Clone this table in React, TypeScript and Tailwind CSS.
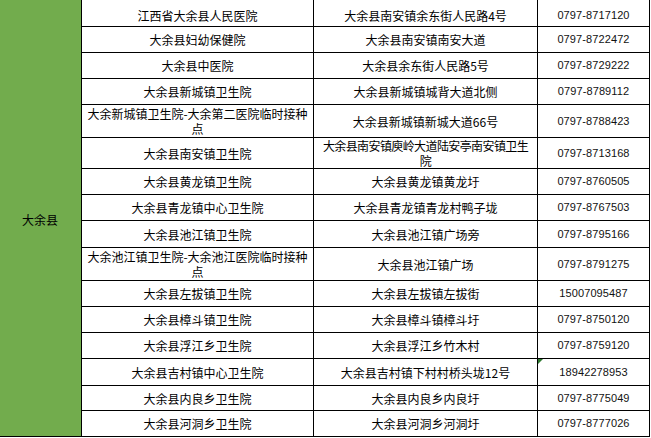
import React from "react";

type Row = {
  name: React.ReactNode;
  address: React.ReactNode;
  phone: string;
  flag?: boolean;
};

const rows: Row[] = [
  { name: "江西省大余县人民医院", address: "大余县南安镇余东街人民路4号", phone: "0797-8717120" },
  { name: "大余县妇幼保健院", address: "大余县南安镇南安大道", phone: "0797-8722472" },
  { name: "大余县中医院", address: "大余县余东街人民路5号", phone: "0797-8729222" },
  { name: "大余县新城镇卫生院", address: "大余县新城镇城背大道北侧", phone: "0797-8789112" },
  {
    name: (
      <>
        大余新城镇卫生院-大余第二医院临时接种
        <br />点
      </>
    ),
    address: "大余县新城镇新城大道66号",
    phone: "0797-8788423",
  },
  {
    name: "大余县南安镇卫生院",
    address: (
      <span className="tracking-[-0.6px]">
        大余县南安镇庾岭大道陆安亭南安镇卫生
        <br />院
      </span>
    ),
    phone: "0797-8713168",
  },
  { name: "大余县黄龙镇卫生院", address: "大余县黄龙镇黄龙圩", phone: "0797-8760505" },
  { name: "大余县青龙镇中心卫生院", address: "大余县青龙镇青龙村鸭子垅", phone: "0797-8767503" },
  { name: "大余县池江镇卫生院", address: "大余县池江镇广场旁", phone: "0797-8795166" },
  {
    name: (
      <>
        大余池江镇卫生院-大余池江医院临时接种
        <br />点
      </>
    ),
    address: "大余县池江镇广场",
    phone: "0797-8791275",
  },
  { name: "大余县左拔镇卫生院", address: "大余县左拔镇左拔街", phone: "15007095487" },
  { name: "大余县樟斗镇卫生院", address: "大余县樟斗镇樟斗圩", phone: "0797-8750120" },
  { name: "大余县浮江乡卫生院", address: "大余县浮江乡竹木村", phone: "0797-8759120" },
  {
    name: "大余县吉村镇中心卫生院",
    address: "大余县吉村镇下村村桥头垅12号",
    phone: "18942278953",
    flag: true,
  },
  { name: "大余县内良乡卫生院", address: "大余县内良乡内良圩", phone: "0797-8775049" },
  { name: "大余县河洞乡卫生院", address: "大余县河洞乡河洞圩", phone: "0797-8777026" },
];

const cell =
  "flex items-center justify-center border-r border-b border-black text-center leading-[15px]";

export default function App() {
  return (
    <div className="h-[438px] w-[651px] overflow-hidden bg-white font-['Noto_Sans_CJK_SC','Noto_Sans',sans-serif] text-[12px] text-black">
      <div className="grid grid-cols-[82px_232px_224px_112px] grid-rows-[27px_26px_26px_26px_33px_31px_26px_26px_27px_33px_26px_26px_26px_27px_25px_26px]">
        <div className="row-span-16 flex items-center border-r border-b border-black bg-[#72ac4d] pl-[22px] pt-[4px]">
          大余县
        </div>
        {rows.map((row, i) => (
          <React.Fragment key={i}>
            <div className={`${cell} ${i === 0 ? "pt-1" : ""}`}>{row.name}</div>
            <div className={`${cell} ${i === 0 ? "pt-1" : ""}`}>{row.address}</div>
            <div
              className={`${cell} relative font-['Liberation_Sans',sans-serif] text-[11px] tracking-[0.1px] text-[#111] ${
                i === 0 ? "pt-1" : ""
              }`}
            >
              {row.flag ? (
                <span className="absolute left-0 top-0 h-0 w-0 border-t-[5px] border-r-[5px] border-t-[#2f7a30] border-r-transparent" />
              ) : null}
              {row.phone}
            </div>
          </React.Fragment>
        ))}
      </div>
    </div>
  );
}
